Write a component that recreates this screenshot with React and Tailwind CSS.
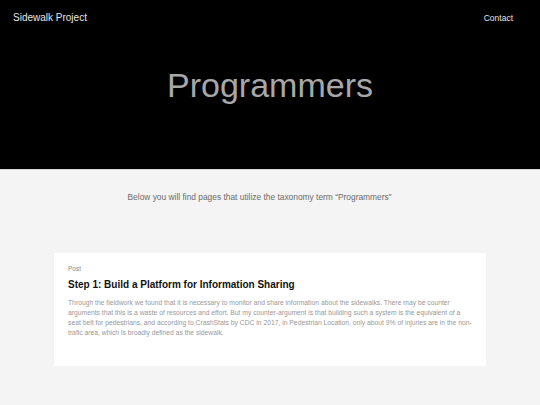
export default function App() {
  return (
    <div className="min-h-[405px] bg-[#f4f4f4] font-['Liberation_Sans',Arial,sans-serif]">
      {/* Hero */}
      <header className="h-[169px] bg-black">
        <nav className="flex items-center justify-between px-[13px] pt-[12px]">
          <a className="text-[10px] leading-[12px] text-[#e6e6e6]">Sidewalk Project</a>
          <a className="pr-[14px] text-[8.5px] leading-[12px] text-[#e6e6e6]">Contact</a>
        </nav>
        <h1 className="mt-[44px] text-center text-[34px] leading-none text-[#a8a8a8]">
          Programmers
        </h1>
      </header>
      <div className="h-px bg-[#d8d8d8]" />

      <p className="mt-[22px] pr-[21px] text-center text-[8.4px] leading-[10px] text-[#6b6b6b]">
        Below you will find pages that utilize the taxonomy term “Programmers”
      </p>

      {/* Posts */}
      <div className="mx-[54px] mt-[51px] bg-white pb-[28px] pl-[14px] pr-[12px] pt-[11px]">
        <div className="text-[6.5px] leading-[10px] text-[#8a8a8a]">Post</div>
        <h2 className="mt-[5px] text-[10px] font-bold leading-[12px] text-[#111]">
          Step 1: Build a Platform for Information Sharing
        </h2>
        <p className="mt-[7px] text-[6.75px] leading-[10px] text-[#999]">
          Through the fieldwork we found that it is necessary to monitor and share information
          about the sidewalks. There may be counter arguments that this is a waste of resources
          and effort. But my counter-argument is that building such a system is the equivalent
          of a seat belt for pedestrians, and according to CrashStats by CDC in 2017, in
          Pedestrian Location, only about 9% of injuries are in the non-trafic area, which is
          broadly defined as the sidewalk.
        </p>
      </div>
    </div>
  );
}
